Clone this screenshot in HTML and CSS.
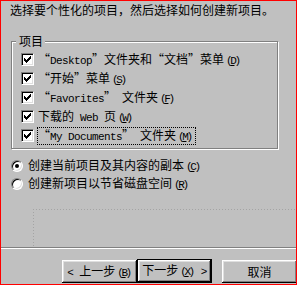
FILE: index.html
```html
<!DOCTYPE html>
<html lang="zh-CN">
<head>
<meta charset="utf-8">
<link rel="stylesheet" href="styles.css">
</head>
<body>
<div class="decor"></div>
<p class="intro">选择要个性化的项目，然后选择如何创建新项目。</p>
<div class="group">
  <div class="legend">项目</div>
  <ul class="checks">
    <li class="row"><span class="cb"><svg width="7" height="7" viewBox="0 0 7 7" shape-rendering="crispEdges"><path d="M6 0h1v1h-1zM5 1h2v1h-2zM0 2h1v1h-1zM4 2h3v1h-3zM0 3h2v1h-2zM3 3h3v1h-3zM0 4h5v1h-5zM1 5h3v1h-3zM2 6h1v1h-1z" fill="#000"/></svg></span><span class="lbl"><span class="ql">“</span><span class="lat">Desktop</span><span class="qr">”</span>文件夹和<span class="ql">“</span>文档<span class="qr">”</span>菜单<span class="acc">(<u>D</u>)</span></span></li>
    <li class="row"><span class="cb"><svg width="7" height="7" viewBox="0 0 7 7" shape-rendering="crispEdges"><path d="M6 0h1v1h-1zM5 1h2v1h-2zM0 2h1v1h-1zM4 2h3v1h-3zM0 3h2v1h-2zM3 3h3v1h-3zM0 4h5v1h-5zM1 5h3v1h-3zM2 6h1v1h-1z" fill="#000"/></svg></span><span class="lbl"><span class="ql">“</span>开始<span class="qr">”</span>菜单<span class="acc">(<u>S</u>)</span></span></li>
    <li class="row"><span class="cb"><svg width="7" height="7" viewBox="0 0 7 7" shape-rendering="crispEdges"><path d="M6 0h1v1h-1zM5 1h2v1h-2zM0 2h1v1h-1zM4 2h3v1h-3zM0 3h2v1h-2zM3 3h3v1h-3zM0 4h5v1h-5zM1 5h3v1h-3zM2 6h1v1h-1z" fill="#000"/></svg></span><span class="lbl"><span class="ql">“</span><span class="lat">Favorites</span><span class="qr">”</span><span class="lat"> </span>文件夹<span class="acc">(<u>F</u>)</span></span></li>
    <li class="row"><span class="cb"><svg width="7" height="7" viewBox="0 0 7 7" shape-rendering="crispEdges"><path d="M6 0h1v1h-1zM5 1h2v1h-2zM0 2h1v1h-1zM4 2h3v1h-3zM0 3h2v1h-2zM3 3h3v1h-3zM0 4h5v1h-5zM1 5h3v1h-3zM2 6h1v1h-1z" fill="#000"/></svg></span><span class="lbl">下载的<span class="lat"> Web </span>页<span class="acc">(<u>W</u>)</span></span></li>
    <li class="row"><span class="cb"><svg width="7" height="7" viewBox="0 0 7 7" shape-rendering="crispEdges"><path d="M6 0h1v1h-1zM5 1h2v1h-2zM0 2h1v1h-1zM4 2h3v1h-3zM0 3h2v1h-2zM3 3h3v1h-3zM0 4h5v1h-5zM1 5h3v1h-3zM2 6h1v1h-1z" fill="#000"/></svg></span><span class="lbl focus"><span class="ql">“</span><span class="lat">My Documents</span><span class="qr">”</span><span class="lat"> </span>文件夹<span class="acc">(<u>M</u>)</span></span></li>
  </ul>
</div>
<ul class="radios">
  <li class="rrow"><span class="radio checked"></span><span class="rlbl">创建当前项目及其内容的副本<span class="acc">(<u>C</u>)</span></span></li>
  <li class="rrow"><span class="radio"></span><span class="rlbl">创建新项目以节省磁盘空间<span class="acc">(<u>R</u>)</span></span></li>
</ul>
<div class="sep"></div>
<div class="buttons">
  <button class="btn"><span class="lat">&lt; </span>上一步<span class="acc">(<u>B</u>)</span></button>
  <button class="btn default">下一步<span class="acc">(<u>X</u>)</span><span class="lat"> &gt;</span></button>
  <button class="btn cancel">取消</button>
</div>
</body>
</html>
```

FILE: styles.css
```css
* { box-sizing: border-box; }
html { background: #c0c0c0; }
body {
  margin: 0;
  width: 297px;
  height: 285px;
  border: 1px solid #ff0000;
  background: #c0c0c0;
  color: #000;
  font-family: "Noto Sans CJK SC", sans-serif;
  font-size: 12px;
  line-height: 16px;
  overflow: hidden;
  position: relative;
}
.decor {
  position: absolute;
  left: 32px;
  top: 208px;
  right: 0;
  height: 38px;
  background-image:
    repeating-linear-gradient(to right, #a4a4a4 0 1px, transparent 1px 3px),
    repeating-linear-gradient(to bottom, #a4a4a4 0 1px, transparent 1px 3px);
  background-size: 100% 1px, 1px 100%;
  background-repeat: no-repeat;
  background-position: 0 0, 0 0;
}
.intro {
  margin: 1px 0 0 9px;
  line-height: 16px;
  white-space: nowrap;
}
.group {
  position: relative;
  margin: 23px 0 0 10px;
  width: 267px;
  height: 108px;
  border: 1px solid #808080;
  box-shadow: inset 1px 1px 0 #fff, 1px 1px 0 #fff;
}
.legend {
  width: max-content;
  margin: -8px 0 0 4px;
  padding: 0 2px 0 3px;
  line-height: 14px;
  background: #c0c0c0;
}
.checks {
  list-style: none;
  margin: 2px 0 0 0;
  padding: 0 0 0 9px;
}
.row {
  display: flex;
  align-items: center;
  height: 19px;
  white-space: nowrap;
}
.cb {
  width: 13px;
  height: 13px;
  flex: none;
  background: #fff;
  border: 1px solid;
  border-color: #808080 #fff #fff #808080;
  box-shadow: inset 1px 1px 0 #000, inset -1px -1px 0 #dfdfdf;
  display: flex;
  align-items: center;
  justify-content: center;
}
.cb svg { display: block; }
.lbl {
  margin-left: 3px;
  border: 1px dotted transparent;
  line-height: 13px;
  padding-right: 2px;
}
.lbl.focus { border-color: #000; }
.ql, .qr {
  display: inline-block;
  width: 12px;
}
.ql { text-align: right; }
.qr { text-align: left; }
.lat {
  font-family: "Liberation Mono", monospace;
  font-size: 11px;
  letter-spacing: -0.6px;
  white-space: pre;
}
.acc {
  font-family: "Liberation Mono", monospace;
  font-size: 11px;
  letter-spacing: -2.4px;
  margin-left: 2px;
  padding-right: 2px;
}
.acc u { text-underline-offset: 1px; }
.radios {
  list-style: none;
  margin: 8px 0 0 0;
  padding: 0 0 0 10px;
}
.rrow {
  display: flex;
  align-items: center;
  height: 18px;
  white-space: nowrap;
}
.radio {
  position: relative;
  width: 12px;
  height: 12px;
  flex: none;
  border-radius: 50%;
  background: #fff;
  border: 1px solid;
  border-color: #808080 #fff #fff #808080;
  box-shadow: inset 1px 1px 0 #000, inset -1px -1px 0 #dfdfdf;
}
.radio.checked::after {
  content: "";
  position: absolute;
  left: 3px;
  top: 3px;
  width: 4px;
  height: 4px;
  border-radius: 50%;
  background: #000;
}
.rlbl { margin-left: 5px; }
.sep {
  margin-top: 54px;
  height: 2px;
  border-top: 1px solid #808080;
  border-bottom: 1px solid #fff;
}
.buttons {
  display: flex;
  margin-top: 11px;
  padding-left: 61px;
}
.btn {
  flex: none;
  width: 75px;
  height: 23px;
  margin: 0;
  padding: 0;
  border: none;
  background: #c0c0c0;
  font: inherit;
  line-height: 16px;
  color: #000;
  box-shadow: inset -1px -1px 0 #000, inset 1px 1px 0 #fff, inset -2px -2px 0 #808080, inset 2px 2px 0 #dfdfdf;
  white-space: nowrap;
}
.btn.default {
  margin-top: -1px;
  height: 24px;
  border: 1px solid #000;
}
.btn.cancel { margin-left: 10px; }
```
